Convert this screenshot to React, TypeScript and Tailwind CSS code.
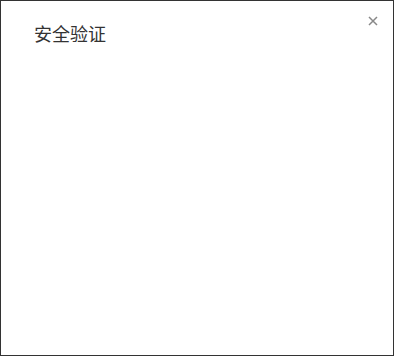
import React from "react";

export default function App() {
  return (
    <div
      className="w-[394px] h-[356px] border border-[#333333] bg-white"
      style={{ fontFamily: '"Noto Sans CJK SC", "Noto Sans", sans-serif' }}
    >
      <div className="flex items-start justify-between pl-[33px] pr-[15px] pt-[15px]">
        <h1 className="mt-[5px] text-[18px] leading-[24px] font-normal text-[#333333]">
          安全验证
        </h1>
        <button className="w-[10px] h-[10px] p-0 text-[#888888]" aria-label="close">
          <svg width="10" height="10" viewBox="0 0 10 10" className="block">
            <path d="M1 1 L9 9 M9 1 L1 9" stroke="currentColor" strokeWidth="1.5" />
          </svg>
        </button>
      </div>
    </div>
  );
}
